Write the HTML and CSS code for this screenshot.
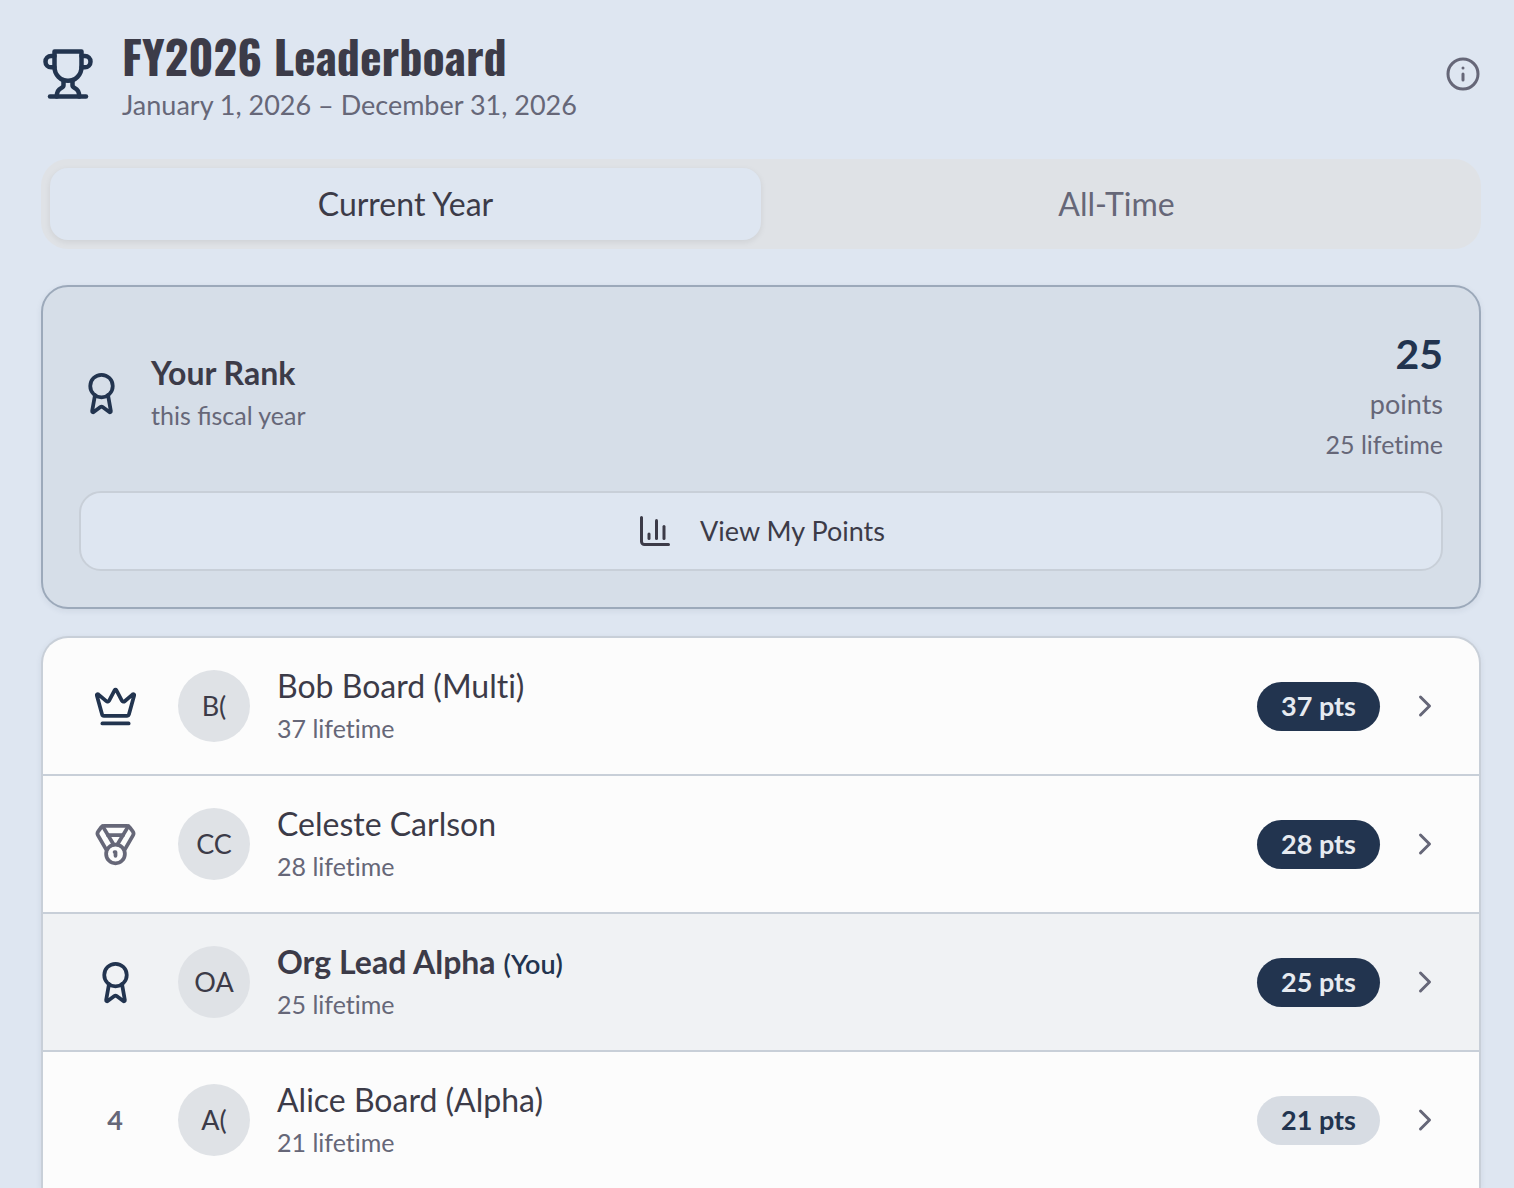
FILE: index.html
```html
<!DOCTYPE html>
<html lang="en">
<head>
    <meta charset="UTF-8">
    <meta name="viewport" content="width=device-width, initial-scale=1.0">
    <title>FY2026 Leaderboard</title>
    <link rel="stylesheet" href="styles.css">
</head>
<body>
    <main class="page">
        <header class="page-header">
            <svg class="icon icon-xl primary" viewBox="0 0 24 24" aria-hidden="true">
                <path d="M6 9H4.5a2.5 2.5 0 0 1 0-5H6"/>
                <path d="M18 9h1.5a2.5 2.5 0 0 0 0-5H18"/>
                <path d="M4 22h16"/>
                <path d="M10 14.66V17c0 .55-.47.98-.97 1.21C7.85 18.75 7 20.24 7 22"/>
                <path d="M14 14.66V17c0 .55.47.98.97 1.21C16.15 18.75 17 20.24 17 22"/>
                <path d="M18 2H6v7a6 6 0 0 0 12 0V2Z"/>
            </svg>
            <div class="heading">
                <h1>FY2026 Leaderboard</h1>
                <p class="period">January 1, 2026 – December 31, 2026</p>
            </div>
            <button class="info-button" type="button" aria-label="About points">
                <svg class="icon icon-md" viewBox="0 0 24 24" aria-hidden="true">
                    <circle cx="12" cy="12" r="10"/>
                    <path d="M12 16v-4"/>
                    <path d="M12 8h.01"/>
                </svg>
            </button>
        </header>

        <div class="tabs" role="tablist">
            <button class="tab active" type="button" role="tab" aria-selected="true">Current Year</button>
            <button class="tab" type="button" role="tab" aria-selected="false">All-Time</button>
        </div>

        <section class="rank-card">
            <div class="rank-summary">
                <svg class="icon icon-lg primary" viewBox="0 0 24 24" aria-hidden="true">
                    <path d="m15.477 12.89 1.515 8.526a.5.5 0 0 1-.81.47l-3.58-2.687a1 1 0 0 0-1.197 0l-3.586 2.686a.5.5 0 0 1-.81-.469l1.514-8.526"/>
                    <circle cx="12" cy="8" r="6"/>
                </svg>
                <div class="rank-text">
                    <h2 class="name">Your Rank</h2>
                    <p class="detail">this fiscal year</p>
                </div>
                <div class="rank-points">
                    <p class="total">25</p>
                    <p class="unit">points</p>
                    <p class="detail">25 lifetime</p>
                </div>
            </div>
            <button class="points-button" type="button">
                <svg class="icon icon-md" viewBox="0 0 24 24" aria-hidden="true">
                    <path d="M3 3v16a2 2 0 0 0 2 2h16"/>
                    <path d="M18 17V9"/>
                    <path d="M13 17V5"/>
                    <path d="M8 17v-3"/>
                </svg>
                View My Points
            </button>
        </section>

        <ol class="leaderboard">
            <li>
                <a class="row" href="#bob">
                    <span class="place">
                        <svg class="icon icon-lg primary" viewBox="0 0 24 24" aria-hidden="true">
                            <path d="M11.562 3.266a.5.5 0 0 1 .876 0L15.39 8.87a1 1 0 0 0 1.516.294L21.183 5.5a.5.5 0 0 1 .798.519l-2.834 10.246a1 1 0 0 1-.956.734H5.81a1 1 0 0 1-.957-.734L2.02 6.02a.5.5 0 0 1 .798-.519l4.276 3.664a1 1 0 0 0 1.516-.294z"/>
                            <path d="M5 21h14"/>
                        </svg>
                    </span>
                    <span class="avatar">B(</span>
                    <span class="person">
                        <span class="name">Bob Board (Multi)</span>
                        <span class="detail">37 lifetime</span>
                    </span>
                    <span class="badge">37 pts</span>
                    <svg class="icon icon-md" viewBox="0 0 24 24" aria-hidden="true"><path d="m9 18 6-6-6-6"/></svg>
                </a>
            </li>
            <li>
                <a class="row" href="#celeste">
                    <span class="place">
                        <svg class="icon icon-lg" viewBox="0 0 24 24" aria-hidden="true">
                            <path d="M7.21 15 2.66 7.14a2 2 0 0 1 .13-2.2L4.4 2.8A2 2 0 0 1 6 2h12a2 2 0 0 1 1.6.8l1.6 2.14a2 2 0 0 1 .14 2.2L16.79 15"/>
                            <path d="M11 12 5.12 2.2"/>
                            <path d="m13 12 5.88-9.8"/>
                            <path d="M8 7h8"/>
                            <circle cx="12" cy="17" r="5"/>
                            <path d="M12 18v-2h-.5"/>
                        </svg>
                    </span>
                    <span class="avatar">CC</span>
                    <span class="person">
                        <span class="name">Celeste Carlson</span>
                        <span class="detail">28 lifetime</span>
                    </span>
                    <span class="badge">28 pts</span>
                    <svg class="icon icon-md" viewBox="0 0 24 24" aria-hidden="true"><path d="m9 18 6-6-6-6"/></svg>
                </a>
            </li>
            <li>
                <a class="row current" href="#you">
                    <span class="place">
                        <svg class="icon icon-lg primary" viewBox="0 0 24 24" aria-hidden="true">
                            <path d="m15.477 12.89 1.515 8.526a.5.5 0 0 1-.81.47l-3.58-2.687a1 1 0 0 0-1.197 0l-3.586 2.686a.5.5 0 0 1-.81-.469l1.514-8.526"/>
                            <circle cx="12" cy="8" r="6"/>
                        </svg>
                    </span>
                    <span class="avatar">OA</span>
                    <span class="person">
                        <span class="name">Org Lead Alpha <span class="you">(You)</span></span>
                        <span class="detail">25 lifetime</span>
                    </span>
                    <span class="badge">25 pts</span>
                    <svg class="icon icon-md" viewBox="0 0 24 24" aria-hidden="true"><path d="m9 18 6-6-6-6"/></svg>
                </a>
            </li>
            <li>
                <a class="row" href="#alice">
                    <span class="place">4</span>
                    <span class="avatar">A(</span>
                    <span class="person">
                        <span class="name">Alice Board (Alpha)</span>
                        <span class="detail">21 lifetime</span>
                    </span>
                    <span class="badge secondary">21 pts</span>
                    <svg class="icon icon-md" viewBox="0 0 24 24" aria-hidden="true"><path d="m9 18 6-6-6-6"/></svg>
                </a>
            </li>
        </ol>
    </main>
</body>
</html>
```
FILE: styles.css
```css
:root {
    --background: #dee6f1;
    --foreground: #3c3b48;
    --primary: #22344f;
    --muted: #dfe2e6;
    --muted-foreground: #666778;
    --border: #c8cfd8;
    --card: #fcfcfc;
}

* {
    margin: 0;
    padding: 0;
    box-sizing: border-box;
}

body {
    font-family: Lato, "Liberation Sans", sans-serif;
    font-size: 27px;
    line-height: 36px;
    background: var(--background);
    color: var(--foreground);
}

button {
    font: inherit;
    color: inherit;
    border: none;
    background: none;
    cursor: pointer;
}

.page {
    padding: 24px 33px 0 41px;
}

.icon {
    display: block;
    flex-shrink: 0;
    fill: none;
    stroke: currentColor;
    stroke-width: 2;
    stroke-linecap: round;
    stroke-linejoin: round;
}

.icon-md {
    width: 36px;
    height: 36px;
}

.icon-lg {
    width: 45px;
    height: 45px;
}

.icon-xl {
    width: 54px;
    height: 54px;
}

.primary {
    color: var(--primary);
}

/* Header */
.page-header {
    display: flex;
    align-items: center;
    gap: 27px;
    margin-bottom: 36px;
}

.heading {
    flex: 1;
}

h1 {
    font-family: Oswald, "Liberation Sans Narrow", "Liberation Sans", sans-serif;
    font-size: 46px;
    font-weight: 700;
    line-height: 63px;
}

.period,
.info-button {
    color: var(--muted-foreground);
}

/* Tabs */
.tabs {
    display: grid;
    grid-template-columns: 1fr 1fr;
    padding: 9px;
    margin-bottom: 36px;
    border-radius: 27px;
    background: var(--muted);
}

.tab {
    padding: 15px;
    border-radius: 18px;
    font-size: 32px;
    line-height: 42px;
    color: var(--muted-foreground);
}

.tab.active {
    background: var(--background);
    color: var(--foreground);
    box-shadow: 0 2px 6px rgba(0, 0, 0, 0.08);
}

/* Current user's rank */
.rank-card {
    padding: 36px;
    margin-bottom: 27px;
    border: 2px solid #9ca9ba;
    border-radius: 27px;
    background: #d6dee8;
    box-shadow: 0 2px 6px rgba(34, 52, 79, 0.08);
}

.rank-summary {
    display: flex;
    align-items: center;
    gap: 27px;
    margin-bottom: 27px;
}

.rank-text {
    flex: 1;
}

.name {
    display: block;
    font-size: 32px;
    font-weight: 400;
    line-height: 42px;
}

.rank-text .name,
.current .name {
    font-weight: 700;
}

.detail {
    display: block;
    font-size: 25px;
    line-height: 42px;
    color: var(--muted-foreground);
}

.rank-points {
    text-align: right;
}

.rank-points,
.person {
    font-variant-ligatures: no-common-ligatures;
}

.total {
    font-size: 41px;
    font-weight: 700;
    line-height: 61px;
    color: var(--primary);
}

.unit {
    color: var(--muted-foreground);
}

.rank-points .unit,
.rank-points .detail {
    line-height: 40px;
}

.points-button {
    display: flex;
    align-items: center;
    justify-content: center;
    gap: 27px;
    width: 100%;
    padding: 20px;
    border: 2px solid var(--border);
    border-radius: 22px;
    background: var(--background);
}

/* Leaderboard list */
.leaderboard {
    list-style: none;
    overflow: hidden;
    border: 2px solid var(--border);
    border-bottom: none;
    border-radius: 27px 27px 0 0;
    background: var(--card);
    box-shadow: 0 2px 6px rgba(34, 52, 79, 0.08);
}

.leaderboard li + li {
    border-top: 2px solid var(--border);
}

.row {
    display: flex;
    align-items: center;
    gap: 27px;
    padding: 25px 36px;
    color: var(--muted-foreground);
    text-decoration: none;
}

.row.current {
    background: #f0f2f4;
}

.place {
    display: flex;
    justify-content: center;
    width: 72px;
    font-weight: 700;
}

.avatar {
    display: flex;
    align-items: center;
    justify-content: center;
    width: 72px;
    height: 72px;
    border-radius: 50%;
    background: var(--muted);
    color: var(--foreground);
}

.person {
    flex: 1;
    padding-top: 2px;
}

.person .name {
    color: var(--foreground);
}

.person .you {
    font-size: 27px;
    font-weight: 600;
    line-height: 1;
    color: var(--primary);
}

.badge {
    padding: 6px 24px 7px;
    border-radius: 25px;
    background: var(--primary);
    color: #e6eaf0;
    font-weight: 700;
}

.badge.secondary {
    background: #d7dce3;
    color: var(--primary);
}
```
